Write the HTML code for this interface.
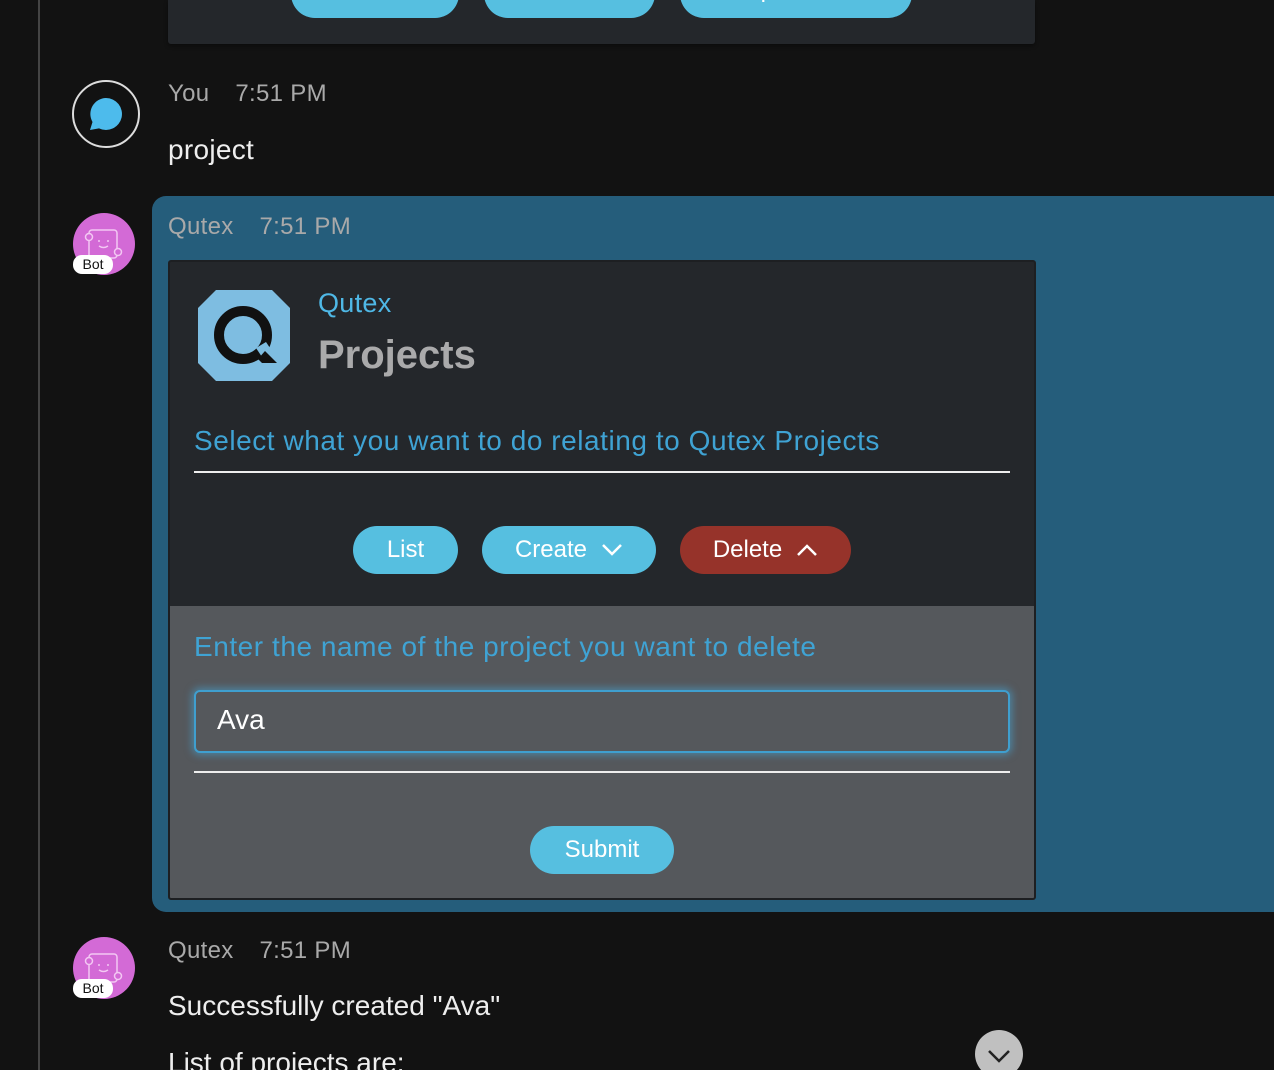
<!DOCTYPE html>
<html><head><meta charset="utf-8"><style>
*{margin:0;padding:0;box-sizing:border-box}
html,body{width:1274px;height:1070px;overflow:hidden}
body{background:#121212;position:relative;font-family:"Liberation Sans",sans-serif;}
.a{position:absolute}
.btn{position:absolute;background:#56bfe0;color:#fff;border-radius:24px;font-size:24px;display:flex;align-items:center;justify-content:center;height:48px}
.meta{position:absolute;font-size:24px;color:#a9a9a9;letter-spacing:0.3px}
.meta span{margin-left:26px}
.bot{position:absolute;width:62px;height:62px;border-radius:50%;background:#d36ad6}
.pill{position:absolute;background:#fff;color:#111;font-size:14px;border-radius:9px;width:40px;height:19px;text-align:center;line-height:19px}
</style></head><body>
<div class="a" style="left:38px;top:0;width:2px;height:1070px;background:#444"></div>

<div class="a" style="left:168px;top:0;width:867px;height:44px;background:#24272b;border-radius:0 0 3px 3px;box-shadow:0 2px 4px rgba(0,0,0,.4)"></div>
<div class="btn" style="left:291px;top:-30px;width:168px;"><span style="position:relative;top:-4px">Public</span></div>
<div class="btn" style="left:484px;top:-30px;width:171px;"><span style="position:relative;top:-4px">Admin</span></div>
<div class="btn" style="left:680px;top:-30px;width:232px;"><span style="position:relative;top:-4px">Superadmin</span></div>

<div class="a" style="left:72px;top:80px;width:68px;height:68px;border:2px solid #ddd;border-radius:50%"></div>
<svg class="a" style="left:88px;top:96px" width="36" height="36" viewBox="0 0 36 36"><path d="M18 2a16 16 0 1 1-7 30.4L2 34l2.5-8A16 16 0 0 1 18 2z" fill="#4dbbec"/></svg>
<div class="meta" style="left:168px;top:80px">You<span>7:51 PM</span></div>
<div class="a" style="left:168px;top:134px;font-size:28px;color:#eee;letter-spacing:0.3px">project</div>

<div class="bot" style="left:73px;top:213px"></div>
<svg class="a" style="left:73px;top:213px" width="62" height="62" viewBox="0 0 62 62"><rect x="16" y="17" width="28" height="28" rx="3" fill="none" stroke="#f3c8f3" stroke-width="1.5"/><circle cx="16" cy="24" r="3.5" fill="#d36ad6" stroke="#f3c8f3" stroke-width="1.5"/><circle cx="45" cy="39" r="3.5" fill="#d36ad6" stroke="#f3c8f3" stroke-width="1.5"/><circle cx="26" cy="28" r="1" fill="#f3c8f3"/><circle cx="35" cy="28" r="1" fill="#f3c8f3"/><path d="M26 33q4.5 3 9 0" fill="none" stroke="#f3c8f3" stroke-width="1.5"/></svg>
<div class="pill" style="left:73px;top:255px">Bot</div>

<div class="a" style="left:152px;top:196px;width:1140px;height:716px;background:#255d7b;border-radius:14px"></div>
<div class="meta" style="left:168px;top:213px">Qutex<span>7:51 PM</span></div>

<div class="a" style="left:168px;top:260px;width:868px;height:640px;background:#24272b;border:2px solid #1d1f22;border-radius:3px;overflow:hidden">
  <div class="a" style="left:0;top:344px;width:866px;height:294px;background:#55585c"></div>
</div>
<svg class="a" style="left:198px;top:290px" width="92" height="91" viewBox="0 0 92 91"><path d="M18 0h56l18 18v55l-18 18H18L0 73V18z" fill="#7ebde1"/><circle cx="45" cy="45" r="24" fill="none" stroke="#111" stroke-width="10"/><path d="M58 58l10-6l12 18h-14z" fill="#7ebde1"/><path d="M60 69l7-8l12 12h-15z" fill="#111"/></svg>
<div class="a" style="left:318px;top:288px;font-size:27px;color:#4fb8e6;letter-spacing:0.3px">Qutex</div>
<div class="a" style="left:318px;top:333px;font-size:40px;font-weight:bold;color:#aaaaab">Projects</div>
<div class="a" style="left:194px;top:425px;font-size:28px;color:#3fa3d4;letter-spacing:0.55px">Select what you want to do relating to Qutex Projects</div>
<div class="a" style="left:194px;top:471px;width:816px;height:2px;background:#eee"></div>

<div class="btn" style="left:353px;top:526px;width:105px">List</div>
<div class="btn" style="left:482px;top:526px;width:174px">Create<svg style="margin-left:14px" width="22" height="14" viewBox="0 0 22 14"><path d="M2 2l9 9 9-9" fill="none" stroke="#fff" stroke-width="2.5"/></svg></div>
<div class="btn" style="left:680px;top:526px;width:171px;background:#96332a">Delete<svg style="margin-left:14px" width="22" height="14" viewBox="0 0 22 14"><path d="M2 12l9-9 9 9" fill="none" stroke="#fff" stroke-width="2.5"/></svg></div>

<div class="a" style="left:194px;top:631px;font-size:28px;color:#3fa3d4;letter-spacing:0.55px">Enter the name of the project you want to delete</div>
<div class="a" style="left:194px;top:690px;width:816px;height:63px;border:2px solid #3f9fcf;border-radius:6px;box-shadow:0 0 8px 2px rgba(70,170,220,.55);background:#55585c"></div>
<div class="a" style="left:217px;top:704px;font-size:28px;color:#fff">Ava</div>
<div class="a" style="left:194px;top:771px;width:816px;height:2px;background:#eee"></div>
<div class="btn" style="left:530px;top:826px;width:144px">Submit</div>

<div class="bot" style="left:73px;top:937px"></div>
<svg class="a" style="left:73px;top:937px" width="62" height="62" viewBox="0 0 62 62"><rect x="16" y="17" width="28" height="28" rx="3" fill="none" stroke="#f3c8f3" stroke-width="1.5"/><circle cx="16" cy="24" r="3.5" fill="#d36ad6" stroke="#f3c8f3" stroke-width="1.5"/><circle cx="45" cy="39" r="3.5" fill="#d36ad6" stroke="#f3c8f3" stroke-width="1.5"/><circle cx="26" cy="28" r="1" fill="#f3c8f3"/><circle cx="35" cy="28" r="1" fill="#f3c8f3"/><path d="M26 33q4.5 3 9 0" fill="none" stroke="#f3c8f3" stroke-width="1.5"/></svg>
<div class="pill" style="left:73px;top:979px">Bot</div>
<div class="meta" style="left:168px;top:937px">Qutex<span>7:51 PM</span></div>
<div class="a" style="left:168px;top:990px;font-size:28px;color:#eee">Successfully created "Ava"</div>
<div class="a" style="left:168px;top:1047px;font-size:28px;color:#eee">List of projects are:</div>

<div class="a" style="left:975px;top:1030px;width:48px;height:48px;border-radius:50%;background:#c0c0c0"></div>
<svg class="a" style="left:987px;top:1048px" width="24" height="16" viewBox="0 0 24 16"><path d="M2 3l10 10 10-10" fill="none" stroke="#222" stroke-width="2.5"/></svg>
</body></html>
